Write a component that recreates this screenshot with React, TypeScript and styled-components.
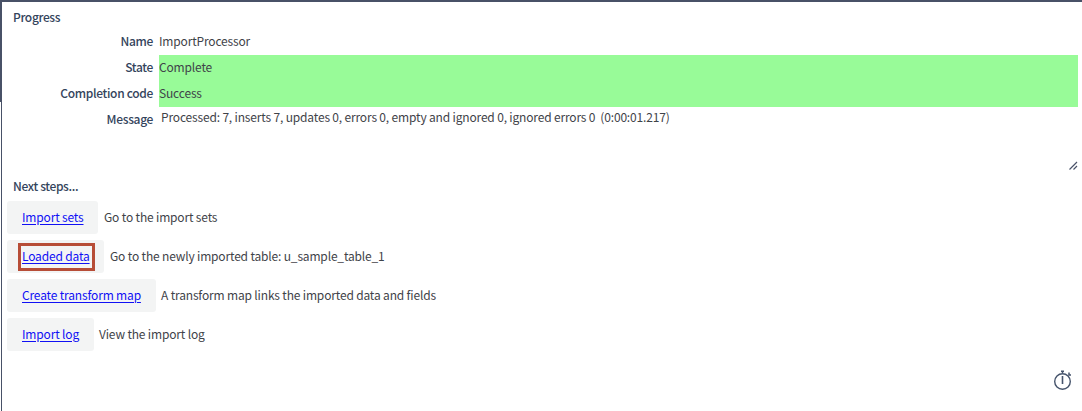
import React from "react";
import styled, { createGlobalStyle } from "styled-components";

const GlobalStyle = createGlobalStyle`
  *, *::before, *::after { box-sizing: border-box; }
  body {
    margin: 0;
    background: #fff;
    color: #3f4349;
    font-family: "Noto Sans CJK SC", "Noto Sans", sans-serif;
    font-size: 12px;
    line-height: 18px;
    letter-spacing: -0.167px;
  }
`;

const Frame = styled.div`
  display: flex;
  width: 1082px;
  height: 411px;
  overflow: hidden;
  border-top: 2px solid #485167;
`;

const Edge = styled.div`
  flex: none;
  width: 2px;
  border-right: 1px solid #485167;

  &::before {
    content: "";
    display: block;
    width: 1px;
    height: 100px;
    background: #485167;
  }
`;

const Panel = styled.main`
  flex: 1;
  display: flex;
  flex-direction: column;
  padding: 6px 4px 0 5px;
`;

const Heading = styled.h2`
  margin: 0;
  padding-left: 6px;
  height: 18px;
  font-size: 12px;
  font-weight: 500;
  line-height: 18px;
  letter-spacing: -0.35px;
  color: #34445c;
`;

const Fields = styled.div`
  display: grid;
  grid-template-columns: 146px 1fr;
  column-gap: 6px;
  grid-template-rows: 26px 26px 26px 63px;
  padding: 3px 0 7px;
`;

const Label = styled.label`
  padding-top: 3px;
  text-align: right;
  font-weight: 500;
  letter-spacing: -0.33px;
  color: #34445c;
  white-space: nowrap;
`;

const Value = styled.div<{ $success?: boolean }>`
  padding-top: 3px;
  white-space: pre;
  background: ${(p) => (p.$success ? "#98fb98" : "transparent")};
`;

const Message = styled.div`
  display: flex;
  justify-content: space-between;
  align-items: flex-start;
  padding: 1px 0 0 2px;
  white-space: pre;
`;

const Grip = styled.svg`
  align-self: flex-end;
  width: 9px;
  height: 9px;
`;

const Steps = styled.section`
  display: flex;
  flex-direction: column;
  gap: 6px;
  padding-top: 6px;
`;

const Step = styled.div`
  display: flex;
  align-items: flex-start;
  height: 33px;
  white-space: nowrap;
`;

const Description = styled.span`
  padding-top: 7px;
`;

const LinkButton = styled.a<{ $width: number; $gap: number; $marked?: boolean }>`
  position: relative;
  flex: none;
  width: ${(p) => p.$width}px;
  height: 33px;
  padding: 7px 0 0 15px;
  margin-right: ${(p) => p.$gap}px;
  border-radius: 3px;
  background: #f3f4f4;
  color: #1010f4;
  text-decoration: underline;
  text-underline-offset: 2px;

  &::after {
    content: ${(p) => (p.$marked ? '""' : "none")};
    position: absolute;
    left: 11px;
    top: 3px;
    width: 77px;
    height: 28px;
    border: 3px solid #b74d37;
  }
`;

const Footer = styled.footer`
  display: flex;
  justify-content: flex-end;
  padding: 18px 6px 0 0;
`;

const steps = [
  { link: "Import sets", text: "Go to the import sets", width: 91, gap: 6 },
  { link: "Loaded data", text: "Go to the newly imported table: u_sample_table_1", width: 97, gap: 6, marked: true },
  { link: "Create transform map", text: "A transform map links the imported data and fields", width: 149, gap: 5 },
  { link: "Import log", text: "View the import log", width: 87, gap: 5 },
];

export default function App() {
  return (
    <>
      <GlobalStyle />
      <Frame>
        <Edge />
        <Panel>
          <Heading>Progress</Heading>
          <Fields>
            <Label>Name</Label>
            <Value>ImportProcessor</Value>
            <Label>State</Label>
            <Value $success>Complete</Value>
            <Label>Completion code</Label>
            <Value $success>Success</Value>
            <Label>Message</Label>
            <Message>
              <span>Processed: 7, inserts 7, updates 0, errors 0, empty and ignored 0, ignored errors 0  (0:00:01.217)</span>
              <Grip viewBox="0 0 9 9" fill="none" stroke="#485167" strokeWidth="1.2">
                <path d="M0.5 8.5L8 1M4.5 8.5L8 5" />
              </Grip>
            </Message>
          </Fields>
          <Heading>Next steps...</Heading>
          <Steps>
            {steps.map((s) => (
              <Step key={s.link}>
                <LinkButton $width={s.width} $gap={s.gap} $marked={s.marked}>{s.link}</LinkButton>
                <Description>{s.text}</Description>
              </Step>
            ))}
          </Steps>
          <Footer>
            <svg width="20" height="22" viewBox="0 0 20 22" fill="none" stroke="#45536b">
              <circle cx="10.5" cy="12.5" r="7.8" strokeWidth="1.4" />
              <path d="M10.5 7v8" strokeWidth="1.6" />
              <path d="M9 2.3h3M10.5 2v2M17 3.5v2.5h2" strokeWidth="1.5" />
            </svg>
          </Footer>
        </Panel>
      </Frame>
    </>
  );
}
